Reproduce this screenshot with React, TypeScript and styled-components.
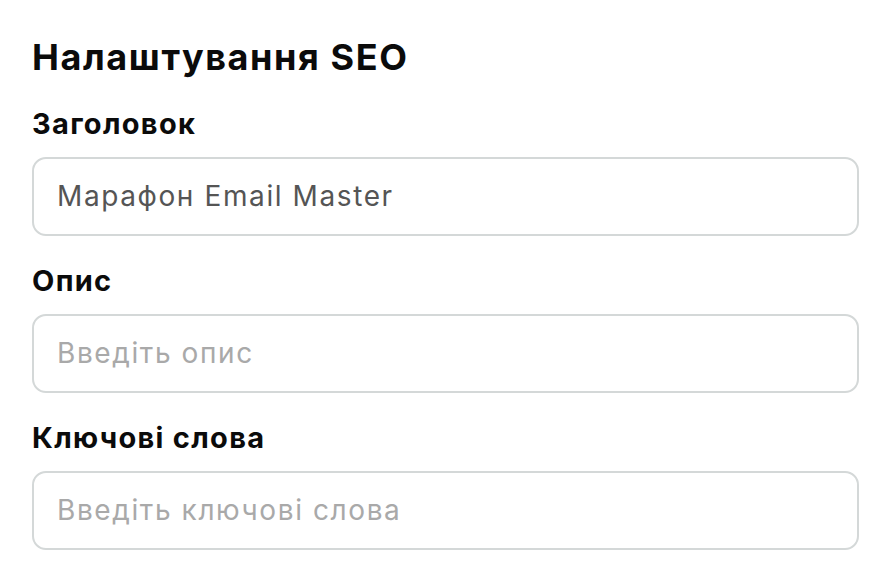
import React from 'react';
import styled, { createGlobalStyle } from 'styled-components';

const GlobalStyle = createGlobalStyle`
    body {
        margin: 0;
        background: #ffffff;
        font-family: Inter, "Noto Sans", sans-serif;
    }
`;

const Page = styled.div`
    display: flex;
    flex-direction: column;
    gap: 28px;
    padding: 36px 33px 0 32px;
    color: #0b0b0b;
`;

const Title = styled.h1`
    margin: 0;
    font-size: 36px;
    line-height: 1.2;
    font-weight: 700;
    letter-spacing: 1.6px;
`;

const Field = styled.div`
    display: flex;
    flex-direction: column;
    gap: 15px;
`;

const Label = styled.label`
    font-size: 29px;
    line-height: 1.2;
    font-weight: 700;
    letter-spacing: 1.3px;
`;

const Input = styled.input`
    box-sizing: border-box;
    width: 100%;
    height: 79px;
    padding: 0 23px;
    border: 2px solid #d4d8d8;
    border-radius: 14px;
    background: #ffffff;
    font-family: inherit;
    font-size: 28px;
    letter-spacing: 1.6px;
    color: #555555;
    outline: none;

    &::placeholder {
        color: #a9a9a9;
    }
`;

const fields = [
    { label: 'Заголовок', value: 'Марафон Email Master', placeholder: 'Введіть заголовок' },
    { label: 'Опис', value: '', placeholder: 'Введіть опис' },
    { label: 'Ключові слова', value: '', placeholder: 'Введіть ключові слова' },
];

export default function App() {
    return (
        <>
            <GlobalStyle />
            <Page>
                <Title>Налаштування SEO</Title>
                {fields.map((field) => (
                    <Field key={field.label}>
                        <Label>{field.label}</Label>
                        <Input readOnly value={field.value} placeholder={field.placeholder} />
                    </Field>
                ))}
            </Page>
        </>
    );
}
